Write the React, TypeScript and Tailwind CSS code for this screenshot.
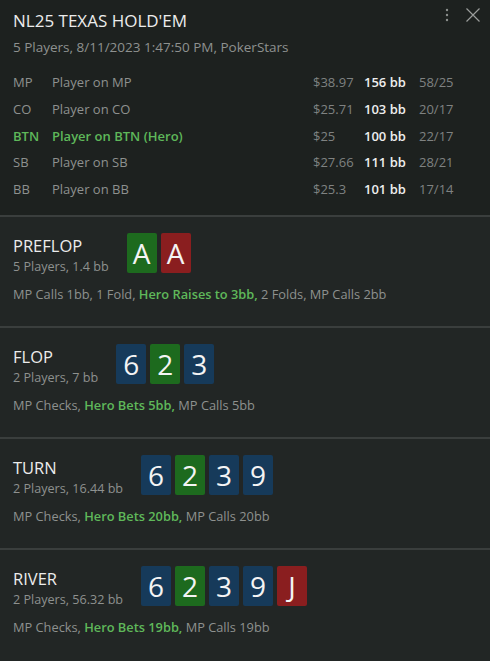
import React from "react";

type Card = { v: string; c: "b" | "g" | "r" };

const players = [
  { pos: "MP", name: "Player on MP", money: "$38.97", bb: "156 bb", ratio: "58/25" },
  { pos: "CO", name: "Player on CO", money: "$25.71", bb: "103 bb", ratio: "20/17" },
  { pos: "BTN", name: "Player on BTN (Hero)", money: "$25", bb: "100 bb", ratio: "22/17", hero: true },
  { pos: "SB", name: "Player on SB", money: "$27.66", bb: "111 bb", ratio: "28/21" },
  { pos: "BB", name: "Player on BB", money: "$25.3", bb: "101 bb", ratio: "17/14" },
];

const streets: {
  name: string;
  sub: string;
  cards: Card[];
  pre: string;
  hero: string;
  post: string;
}[] = [
  {
    name: "PREFLOP",
    sub: "5 Players, 1.4 bb",
    cards: [
      { v: "A", c: "g" },
      { v: "A", c: "r" },
    ],
    pre: "MP Calls 1bb, 1 Fold, ",
    hero: "Hero Raises to 3bb,",
    post: " 2 Folds, MP Calls 2bb",
  },
  {
    name: "FLOP",
    sub: "2 Players, 7 bb",
    cards: [
      { v: "6", c: "b" },
      { v: "2", c: "g" },
      { v: "3", c: "b" },
    ],
    pre: "MP Checks, ",
    hero: "Hero Bets 5bb,",
    post: " MP Calls 5bb",
  },
  {
    name: "TURN",
    sub: "2 Players, 16.44 bb",
    cards: [
      { v: "6", c: "b" },
      { v: "2", c: "g" },
      { v: "3", c: "b" },
      { v: "9", c: "b" },
    ],
    pre: "MP Checks, ",
    hero: "Hero Bets 20bb,",
    post: " MP Calls 20bb",
  },
  {
    name: "RIVER",
    sub: "2 Players, 56.32 bb",
    cards: [
      { v: "6", c: "b" },
      { v: "2", c: "g" },
      { v: "3", c: "b" },
      { v: "9", c: "b" },
      { v: "J", c: "r" },
    ],
    pre: "MP Checks, ",
    hero: "Hero Bets 19bb,",
    post: " MP Calls 19bb",
  },
];

function CardBox({ card }: { card: Card }) {
  const bg =
    card.c === "b" ? "bg-[#163a5a]" : card.c === "g" ? "bg-[#1d6a1e]" : "bg-[#8a1e1f]";
  return (
    <div
      className={`${bg} w-[30px] h-[40px] rounded-[2px] flex items-center justify-center text-[28px] leading-none text-[#f4f4f4]`}
    >
      {card.v}
    </div>
  );
}

export default function App() {
  return (
    <div
      className="w-[490px] h-[661px] bg-[#222625] overflow-hidden flex flex-col"
      style={{ fontFamily: '"Open Sans", "Noto Sans", sans-serif' }}
    >
      <div className="bg-[#1d211f] px-[13px] pt-[8px] h-[215px] shrink-0 relative">
        <div className="text-[17px] leading-[26px] text-[#ececec]">NL25 TEXAS HOLD'EM</div>
        <div className="text-[13.5px] leading-[18px] mt-[4px] text-[#8e918f]">
          5 Players, 8/11/2023 1:47:50 PM, PokerStars
        </div>
        <div className="absolute right-[10px] top-[8px] flex items-center gap-[17px]">
          <svg width="4" height="14" viewBox="0 0 4 14" fill="#8c8f8d">
            <circle cx="2" cy="2" r="1.2" />
            <circle cx="2" cy="7" r="1.2" />
            <circle cx="2" cy="12" r="1.2" />
          </svg>
          <svg width="14" height="14" viewBox="0 0 14 14" stroke="#9a9d9b" strokeWidth="1.2" fill="none">
            <path d="M0.5 0.5 L13.5 13.5 M13.5 0.5 L0.5 13.5" />
          </svg>
        </div>
        <div className="mt-[13.6px] flex flex-col text-[13px]">
          {players.map((p) => (
            <div
              key={p.pos}
              className="grid grid-cols-[39px_1fr_51px_55px_58px] h-[26.75px] items-center"
            >
              <div className={p.hero ? "text-[#5fb85a] font-semibold" : "text-[#8e918f]"}>{p.pos}</div>
              <div className={p.hero ? "text-[#5fb85a] font-semibold" : "text-[#8e918f]"}>{p.name}</div>
              <div className="text-[#7f8281]">{p.money}</div>
              <div className="text-[#eeeeee] font-semibold">{p.bb}</div>
              <div className="text-[#7f8281]">{p.ratio}</div>
            </div>
          ))}
        </div>
      </div>
      {streets.map((s) => (
        <div
          key={s.name}
          className="border-t-[2px] border-[#3a3e3d] h-[111px] px-[13px] pt-[17px] flex flex-col shrink-0"
        >
          <div className="flex items-start gap-[18px]">
            <div className="flex flex-col">
              <div className="text-[16.5px] leading-[24px] text-[#ececec]">{s.name}</div>
              <div className="text-[12.6px] leading-[18px] text-[#8e918f]">{s.sub}</div>
            </div>
            <div className="flex gap-[4px] -mt-[1px]">
              {s.cards.map((c, i) => (
                <CardBox key={i} card={c} />
              ))}
            </div>
          </div>
          <div className="mt-[9px] text-[12.8px] leading-[18px] text-[#8e918f]">
            {s.pre}
            <span className="text-[#5fb85a] font-semibold">{s.hero}</span>
            {s.post}
          </div>
        </div>
      ))}
    </div>
  );
}
